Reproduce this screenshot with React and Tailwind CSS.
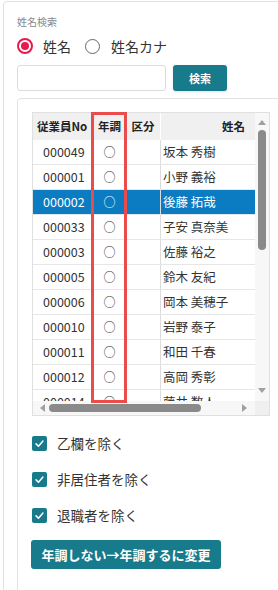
import { useState } from "react";

const rows = [
  { no: "000049", name: "坂本 秀樹" },
  { no: "000001", name: "小野 義裕" },
  { no: "000002", name: "後藤 拓哉" },
  { no: "000033", name: "子安 真奈美" },
  { no: "000003", name: "佐藤 裕之" },
  { no: "000005", name: "鈴木 友紀" },
  { no: "000006", name: "岡本 美穂子" },
  { no: "000010", name: "岩野 泰子" },
  { no: "000011", name: "和田 千春" },
  { no: "000012", name: "高岡 秀彰" },
  { no: "000014", name: "藤井 数人" },
];

const options = ["乙欄を除く", "非居住者を除く", "退職者を除く"];

const CheckIcon = () => (
  <svg viewBox="0 0 16 16" className="w-[11px] h-[11px]">
    <polyline
      points="3,8.5 6.5,12 13,4.5"
      fill="none"
      stroke="white"
      strokeWidth="2.2"
      strokeLinecap="round"
      strokeLinejoin="round"
    />
  </svg>
);

const App = () => {
  const [mode, setMode] = useState("name");
  const [selected, setSelected] = useState("000002");

  return (
    <div className="w-[278px] h-[590px] overflow-hidden bg-white font-['Noto_Sans_CJK_JP',sans-serif] text-[#333]">
      {/* 外枠 */}
      <div className="ml-[3px] mt-[1px] w-[320px] h-[640px] border border-[#e2e2e2] rounded-[4px] pl-[13px] pt-[13px]">
        <div className="text-[10px] leading-[14px] text-[#888]">姓名検索</div>

        {/* ラジオ */}
        <div className="mt-[7px] h-[20px] flex items-center">
          <button className="flex items-center" onClick={() => setMode("name")}>
            <span
              className={`w-[16px] h-[16px] rounded-full border-2 flex items-center justify-center ${
                mode === "name" ? "border-[#e8194f]" : "border-[#666]"
              }`}
            >
              {mode === "name" && <span className="w-[8px] h-[8px] rounded-full bg-[#e8194f]" />}
            </span>
            <span className="ml-[10px] text-[14px] leading-[20px]">姓名</span>
          </button>
          <button className="flex items-center ml-[14px]" onClick={() => setMode("kana")}>
            <span
              className={`w-[15px] h-[15px] rounded-full border-[1.5px] flex items-center justify-center ${
                mode === "kana" ? "border-[#e8194f]" : "border-[#666]"
              }`}
            >
              {mode === "kana" && <span className="w-[7px] h-[7px] rounded-full bg-[#e8194f]" />}
            </span>
            <span className="ml-[11px] text-[14px] leading-[20px]">姓名カナ</span>
          </button>
        </div>

        {/* 検索 */}
        <div className="mt-[9px] flex items-center gap-[7px]">
          <input className="w-[149px] h-[26px] border border-[#dcdcdc] rounded-[3px] outline-none px-2 text-[12px]" />
          <button className="w-[54px] h-[26px] rounded-[3px] bg-[#187b8b] text-white text-[11px] font-bold shadow-sm">
            検索
          </button>
        </div>

        {/* 内枠 */}
        <div className="mt-[7px] w-[300px] h-[600px] border border-[#e2e2e2] rounded-[4px] pl-[14px] pt-[13px]">
          {/* 一覧 */}
          <div className="relative w-[238px] border border-[#e0e0e0] bg-white">
            <div className="flex">
              <div className="w-[222px]">
                <div className="h-[27px] flex bg-[#f0f0f0] text-[11.5px] font-bold text-[#222]">
                  <div className="w-[60px] pl-[4px] flex items-center">従業員No</div>
                  <div className="w-[33px] flex items-center justify-center">年調</div>
                  <div className="w-[34px] flex items-center justify-center">区分</div>
                  <div className="w-[95px] pr-[10px] flex items-center justify-end border-l border-white">
                    姓名
                  </div>
                </div>
                <div className="h-[261px] overflow-hidden">
                  {rows.map((r) => {
                    const active = r.no === selected;
                    return (
                      <div
                        key={r.no}
                        onClick={() => setSelected(r.no)}
                        className={`h-[25px] flex text-[12.5px] border-b border-[#e6e6e6] ${
                          active ? "bg-[#0b7cc2] text-white" : "text-[#333]"
                        }`}
                      >
                        <div className="w-[60px] pl-[10px] flex items-center">{r.no}</div>
                        <div className="w-[33px] flex items-center justify-center text-[12px]">○</div>
                        <div className="w-[34px]" />
                        <div className="w-[95px] pl-[2px] flex items-center border-l border-[#dcdcdc]">
                          {r.name}
                        </div>
                      </div>
                    );
                  })}
                </div>
              </div>

              {/* 縦スクロール */}
              <div className="w-[14px] h-[288px] bg-[#f7f7f7] flex flex-col items-center">
                <div className="mt-[7px] w-0 h-0 border-l-[4px] border-r-[4px] border-b-[5px] border-l-transparent border-r-transparent border-b-[#a0a0a0]" />
                <div className="mt-[5px] w-[8px] h-[120px] rounded-full bg-[#8a8a8a]" />
                <div className="mt-auto mb-[8px] w-0 h-0 border-l-[4px] border-r-[4px] border-t-[5px] border-l-transparent border-r-transparent border-t-[#a0a0a0]" />
              </div>
            </div>

            {/* 横スクロール */}
            <div className="flex h-[14px]">
              <div className="w-[222px] bg-[#f7f7f7] flex items-center">
                <div className="ml-[7px] w-0 h-0 border-t-[4px] border-b-[4px] border-r-[5px] border-t-transparent border-b-transparent border-r-[#a0a0a0]" />
                <div className="ml-[4px] w-[152px] h-[8px] rounded-full bg-[#8a8a8a]" />
                <div className="ml-auto mr-[8px] w-0 h-0 border-t-[4px] border-b-[4px] border-l-[5px] border-t-transparent border-b-transparent border-l-[#a0a0a0]" />
              </div>
              <div className="w-[14px] bg-[#efefef]" />
            </div>

            {/* 年調列の強調枠 */}
            <div className="absolute left-[58px] top-[-1px] w-[36px] h-[291px] border-[3px] border-[#ea4b4b] pointer-events-none" />
          </div>

          {/* 除外条件 */}
          <div className="mt-[20px] flex flex-col gap-[21px]">
            {options.map((o) => (
              <label key={o} className="h-[15px] flex items-center">
                <span className="w-[15px] h-[15px] rounded-[2px] bg-[#187b8b] flex items-center justify-center">
                  <CheckIcon />
                </span>
                <span className="ml-[10px] text-[13.5px] leading-[15px] text-[#333]">{o}</span>
              </label>
            ))}
          </div>

          <button className="mt-[17px] -ml-[1px] w-[190px] h-[29px] rounded-[3px] bg-[#187b8b] text-white text-[13px] font-bold">
            年調しない→年調するに変更
          </button>
        </div>
      </div>
    </div>
  );
};

export default App;
